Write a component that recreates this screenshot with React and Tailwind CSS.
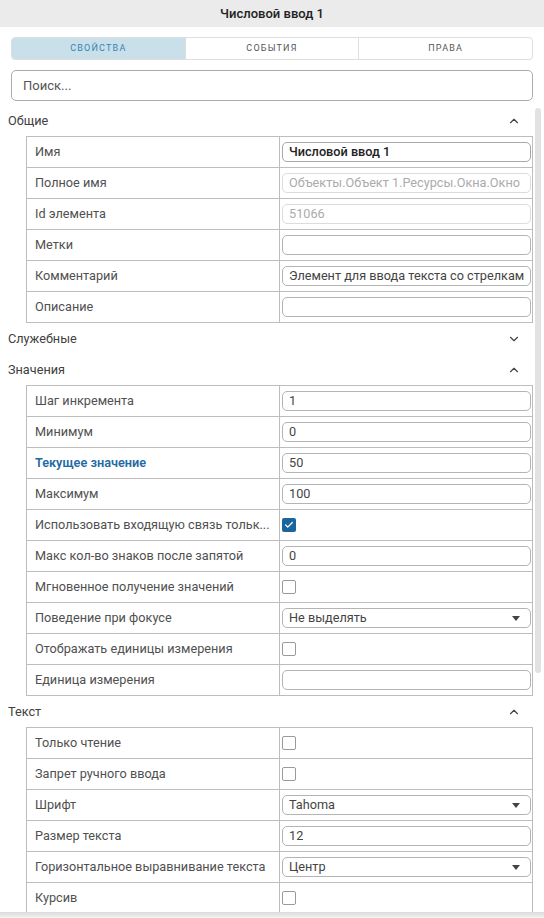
import React from "react";
import { ChevronUp, ChevronDown, Check } from "lucide-react";

const font = { fontFamily: "Roboto, 'Noto Sans', sans-serif" };

function TextInput({ value = "", disabled = false, strong = false }) {
  return (
    <div
      className={`flex h-[20px] w-full min-w-0 items-center rounded-[5px] border pl-[6px] pr-[5px] text-[12.7px] ${
        disabled
          ? "border-[#dcdcdc] text-[#ababab]"
          : strong
          ? "border-[#a8a8a8] font-medium text-[#222]"
          : "border-[#b4b4b4] text-[#444]"
      }`}
    >
      <span className="min-w-0 overflow-hidden whitespace-nowrap">{value}</span>
    </div>
  );
}

function SelectInput({ value }) {
  return (
    <div className="flex h-[20px] w-full min-w-0 items-center justify-between rounded-[5px] border border-[#b4b4b4] pl-[6px] pr-[10px] text-[12.7px] text-[#444]">
      <span>{value}</span>
      <svg width="8" height="5" viewBox="0 0 8 5">
        <path d="M0 0h8L4 5z" fill="#444" />
      </svg>
    </div>
  );
}

function CheckBox({ checked = false }) {
  return checked ? (
    <div className="flex h-[14px] w-[14px] items-center justify-center rounded-[2px] bg-[#1a659e]">
      <Check size={10} strokeWidth={3} color="#fff" />
    </div>
  ) : (
    <div className="h-[14px] w-[14px] rounded-[2px] border border-[#9a9a9a] bg-white" />
  );
}

function Row({ label, accent, children }) {
  return (
    <div className="flex h-[31px] border-b border-[#bdbdbd]">
      <div
        className={`flex w-[253px] shrink-0 items-center overflow-hidden whitespace-nowrap border-r border-[#bdbdbd] pl-[8px] text-[12.7px] ${
          accent ? "font-semibold text-[#1f6aa5]" : "text-[#505050]"
        }`}
      >
        {label}
      </div>
      <div className="flex min-w-0 flex-1 items-center pl-[2px] pr-[1px]">{children}</div>
    </div>
  );
}

function Section({ title, open = true, children }) {
  return (
    <div>
      <div className="flex h-[31px] items-center justify-between pl-[8px] pr-[12px] text-[12.7px] text-[#404040]">
        <span>{title}</span>
        {open ? (
          <ChevronUp size={14} strokeWidth={2} color="#444" />
        ) : (
          <ChevronDown size={14} strokeWidth={2} color="#444" />
        )}
      </div>
      {open && (
        <div className="ml-[26px] border-l border-r border-t border-[#bdbdbd]">{children}</div>
      )}
    </div>
  );
}

const tabs = ["Свойства", "События", "Права"];

export default function App() {
  return (
    <div className="relative h-[918px] w-[544px] overflow-hidden bg-white" style={font}>
      {/* title bar */}
      <div className="flex h-[27px] items-center justify-center bg-[#ebebeb] text-[13px] font-medium text-[#222]">
        Числовой ввод 1
      </div>

      {/* tabs */}
      <div className="mx-[11px] mt-[10px] flex h-[23px] overflow-hidden rounded-[4px] border border-[#dedede]">
        {tabs.map((t, i) => (
          <div
            key={t}
            className={`flex flex-1 items-center justify-center text-[9px] uppercase tracking-[1.2px] ${
              i === 0 ? "bg-[#c9dfe9] text-[#3484b5]" : "text-[#555]"
            } ${i > 0 ? "border-l border-[#dedede]" : ""}`}
          >
            {t}
          </div>
        ))}
      </div>

      {/* search */}
      <div className="mx-[11px] mt-[10px] flex h-[31px] items-center rounded-[5px] border border-[#ababab] pl-[11px] text-[13px] text-[#555]">
        Поиск...
      </div>

      {/* property list */}
      <div className="mt-[4px] flex">
        <div className="w-[533px] shrink-0">
          <Section title="Общие">
            <Row label="Имя">
              <TextInput value="Числовой ввод 1" strong />
            </Row>
            <Row label="Полное имя">
              <TextInput value="Объекты.Объект 1.Ресурсы.Окна.Окно" disabled />
            </Row>
            <Row label="Id элемента">
              <TextInput value="51066" disabled />
            </Row>
            <Row label="Метки">
              <TextInput />
            </Row>
            <Row label="Комментарий">
              <TextInput value="Элемент для ввода текста со стрелкам" />
            </Row>
            <Row label="Описание">
              <TextInput />
            </Row>
          </Section>

          <Section title="Служебные" open={false} />

          <Section title="Значения">
            <Row label="Шаг инкремента">
              <TextInput value="1" />
            </Row>
            <Row label="Минимум">
              <TextInput value="0" />
            </Row>
            <Row label="Текущее значение" accent>
              <TextInput value="50" />
            </Row>
            <Row label="Максимум">
              <TextInput value="100" />
            </Row>
            <Row label="Использовать входящую связь тольк...">
              <CheckBox checked />
            </Row>
            <Row label="Макс кол-во знаков после запятой">
              <TextInput value="0" />
            </Row>
            <Row label="Мгновенное получение значений">
              <CheckBox />
            </Row>
            <Row label="Поведение при фокусе">
              <SelectInput value="Не выделять" />
            </Row>
            <Row label="Отображать единицы измерения">
              <CheckBox />
            </Row>
            <Row label="Единица измерения">
              <TextInput />
            </Row>
          </Section>

          <Section title="Текст">
            <Row label="Только чтение">
              <CheckBox />
            </Row>
            <Row label="Запрет ручного ввода">
              <CheckBox />
            </Row>
            <Row label="Шрифт">
              <SelectInput value="Tahoma" />
            </Row>
            <Row label="Размер текста">
              <TextInput value="12" />
            </Row>
            <Row label="Горизонтальное выравнивание текста">
              <SelectInput value="Центр" />
            </Row>
            <Row label="Курсив">
              <CheckBox />
            </Row>
            <Row label="" />
          </Section>
        </div>

        {/* scrollbar thumb */}
        <div className="ml-[2px] mt-[3px] h-[565px] w-[6px] rounded-[3px] bg-[#e2e2e2]" />
      </div>

      {/* bottom fade */}
      <div className="pointer-events-none absolute bottom-0 left-0 right-0 h-[6px] bg-gradient-to-b from-[#dadada] to-[#f4f4f4]" />
    </div>
  );
}
